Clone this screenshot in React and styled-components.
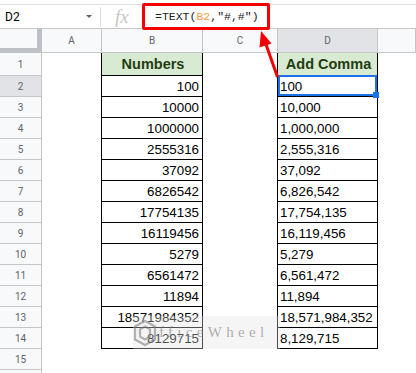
import React from 'react'
import styled, { createGlobalStyle, css } from 'styled-components'

const GlobalStyle = createGlobalStyle`
  *, *::before, *::after { box-sizing: border-box; }
  html, body { margin: 0; padding: 0; background: #fff; }
  body { font-family: "Liberation Sans", Arial, sans-serif; overflow: hidden; }
`

const Page = styled.div`
  position: relative;
  width: 416px;
  height: 373px;
  overflow: hidden;
`

const TopStrip = styled.div`
  height: 5px;
  border-bottom: 1px solid #e0e0e0;
`

const FormulaBar = styled.div`
  display: flex;
  align-items: center;
  height: 24px;
  border-bottom: 1px solid #c7c7c7;
`

const NameBox = styled.div`
  width: 100px;
  display: flex;
  align-items: center;
  justify-content: space-between;
  padding: 0 8px 0 5px;
  font-family: Roboto, "Liberation Sans", sans-serif;
  font-size: 12px;
  color: #000;
`

const Caret = styled.span`
  width: 0;
  height: 0;
  border-left: 3.5px solid transparent;
  border-right: 3.5px solid transparent;
  border-top: 3.5px solid #5f6368;
`

const Divider = styled.div`
  width: 1px;
  height: 20px;
  background: #e0e0e0;
`

const Fx = styled.div`
  width: 54px;
  padding-left: 14px;
  font-family: "Liberation Serif", serif;
  font-style: italic;
  font-size: 19px;
  color: #c6c6c6;
  line-height: 1;
`

const Formula = styled.div`
  font-family: "Liberation Mono", monospace;
  font-size: 11.5px;
  color: #202124;
  white-space: pre;
`

const Ref = styled.span`
  color: #f29b3f;
`

const Callout = styled.div`
  position: absolute;
  left: 142px;
  top: 3px;
  width: 128px;
  height: 27px;
  border: 3px solid #f40000;
  border-radius: 2px;
  pointer-events: none;
`

const Sheet = styled.div`
  display: grid;
  grid-template-columns: 42px 60px 101px 75px 100px 1fr;
  grid-template-rows: 24px 23px repeat(15, 21px);
`

const Corner = styled.div`
  background: #f8f9fa;
  border-right: 5px solid #bdc1c6;
  border-bottom: 5px solid #bdc1c6;
`

const ColHeader = styled.div`
  display: flex;
  align-items: center;
  justify-content: center;
  background: ${p => (p.$active ? '#e1e3e6' : '#f8f9fa')};
  border-right: 1px solid #c4c7c5;
  border-bottom: 1px solid #c4c7c5;
  font-family: Roboto, "Liberation Sans", sans-serif;
  font-size: 10px;
  color: #5f6368;
`

const RowHeader = styled.div`
  display: flex;
  align-items: center;
  justify-content: center;
  background: ${p => (p.$active ? '#e1e3e6' : '#f8f9fa')};
  border-right: 1px solid #c4c7c5;
  border-bottom: 1px solid #c4c7c5;
  font-family: Roboto, "Liberation Sans", sans-serif;
  font-size: 10px;
  color: #5f6368;
`

const Cell = styled.div`
  position: relative;
  display: flex;
  align-items: center;
  font-size: 13.33px;
  color: #000;
  white-space: nowrap;
  justify-content: ${p => (p.$align === 'right' ? 'flex-end' : p.$align === 'center' ? 'center' : 'flex-start')};
  padding: ${p => (p.$align === 'right' ? '0 3px 0 0' : '0 0 0 2px')};

  ${p => p.$boxed && css`
    margin-left: -1px;
    border-left: 1px solid #000;
    border-right: 1px solid #000;
    border-bottom: 1px solid #000;
  `}

  ${p => p.$head && css`
    background: #d9ead3;
    font-weight: bold;
    font-size: 14.5px;
    color: #1f3d10;
  `}

  ${p => p.$selected && css`
    &::after {
      content: '';
      position: absolute;
      top: -1px;
      left: 0;
      right: 0;
      bottom: 0;
      border: 2px solid #1a73e8;
    }
    &::before {
      content: '';
      position: absolute;
      right: -2px;
      bottom: -2px;
      width: 6px;
      height: 6px;
      background: #1a73e8;
      z-index: 1;
    }
  `}
`

const Arrow = styled.svg`
  position: absolute;
  left: 0;
  top: 0;
  pointer-events: none;
`

const Watermark = styled.div`
  position: absolute;
  left: 133px;
  top: 316px;
  width: 147px;
  height: 33px;
  display: flex;
  align-items: center;
  gap: 2px;
  background: rgba(225, 225, 225, 0.35);
  pointer-events: none;
`

const WatermarkText = styled.span`
  font-family: "Liberation Serif", serif;
  font-size: 15px;
  letter-spacing: 4.3px;
  color: rgba(120, 120, 120, 0.6);
`

const numbers = [
  100, 10000, 1000000, 2555316, 37092, 6826542, 17754135,
  16119456, 5279, 6561472, 11894, 18571984352, 8129715,
]

const withCommas = n => String(n).replace(/\B(?=(\d{3})+(?!\d))/g, ',')

export default function App() {
  const rows = [{ b: 'Numbers', d: 'Add Comma', head: true }]
    .concat(numbers.map(n => ({ b: String(n), d: withCommas(n) })))

  return (
    <Page>
      <GlobalStyle />
      <TopStrip />
      <FormulaBar>
        <NameBox>
          D2
          <Caret />
        </NameBox>
        <Divider />
        <Fx>fx</Fx>
        <Formula>=TEXT(<Ref>B2</Ref>,"#,#")</Formula>
      </FormulaBar>

      <Sheet>
        <Corner />
        {['A', 'B', 'C', 'D', ''].map(c => (
          <ColHeader key={c || 'E'} $active={c === 'D'}>{c}</ColHeader>
        ))}

        {rows.map((r, i) => (
          <React.Fragment key={i}>
            <RowHeader $active={i === 1}>{i + 1}</RowHeader>
            <Cell />
            <Cell $boxed $head={r.head} $align={r.head ? 'center' : 'right'}>{r.b}</Cell>
            <Cell />
            <Cell $boxed $head={r.head} $selected={i === 1} $align={r.head ? 'center' : 'left'}>{r.d}</Cell>
            <Cell />
          </React.Fragment>
        ))}

        {[15, 16].map(n => (
          <React.Fragment key={n}>
            <RowHeader>{n}</RowHeader>
            <Cell /><Cell /><Cell /><Cell /><Cell />
          </React.Fragment>
        ))}
      </Sheet>

      <Arrow width="416" height="373" viewBox="0 0 416 373">
        <line x1="277.5" y1="77" x2="265.5" y2="43" stroke="#f40000" strokeWidth="3" />
        <polygon points="261,31 271.5,43.5 259.5,47.5" fill="#f40000" />
      </Arrow>

      <Watermark>
        <svg width="24" height="28" viewBox="0 0 24 28">
          <g fill="none" stroke="rgba(120,120,120,0.55)" strokeWidth="2.2">
            <polygon points="12,2 22,7.5 22,20.5 12,26 2,20.5 2,7.5" />
            <polygon points="12,7.5 17,10.3 17,17.7 12,20.5 7,17.7 7,10.3" />
          </g>
        </svg>
        <WatermarkText>fficeWheel</WatermarkText>
      </Watermark>

      <Callout />
    </Page>
  )
}
